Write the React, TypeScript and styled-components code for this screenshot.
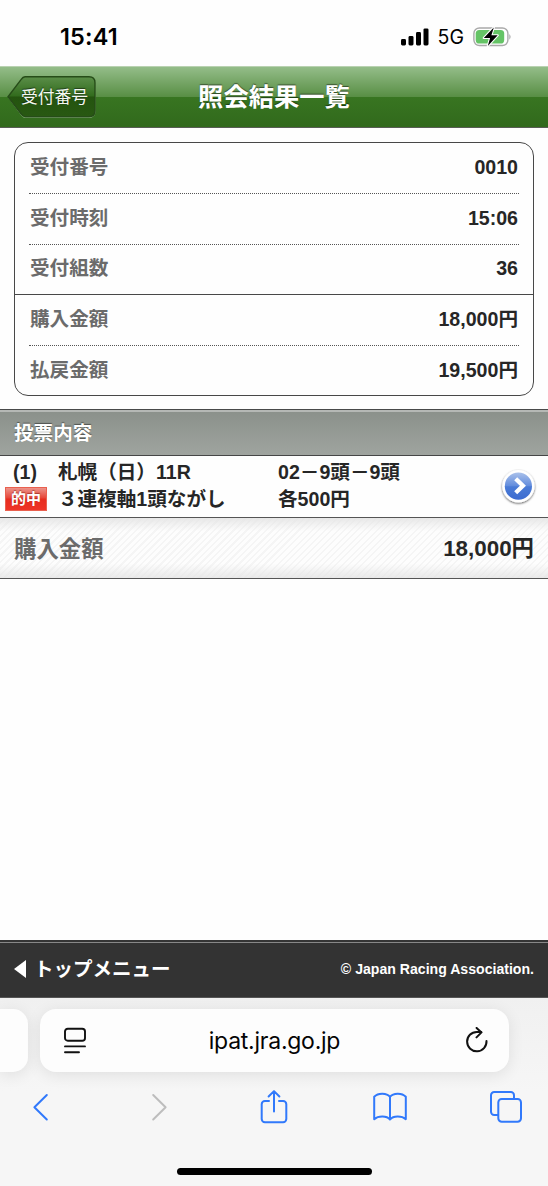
import React from "react";
import styled, { createGlobalStyle } from "styled-components";

const GlobalStyle = createGlobalStyle`
  * { box-sizing: border-box; }
  body {
    margin: 0;
    background: #fefefe;
    color: #262626;
    font-family: "Liberation Sans", "Noto Sans CJK JP", sans-serif;
  }
  svg { display: block; flex: none; }
`;

const Screen = styled.div`
  width: 548px;
  height: 1186px;
  display: flex;
  flex-direction: column;
  overflow: hidden;
  background: #fefefe;
`;

const StatusBar = styled.div`
  flex: none;
  height: 66px;
  padding: 7px 36px 0 60px;
  display: flex;
  align-items: center;
  font-family: Inter, sans-serif;
  color: #000;
`;

const Clock = styled.span`
  font-size: 23.5px;
  font-weight: 600;
  letter-spacing: 0.15px;
`;

const Signals = styled.div`
  margin-left: auto;
  display: flex;
  align-items: center;
`;

const Network = styled.span`
  font-size: 19.5px;
  font-weight: 400;
  margin: 1px 9px 0 9px;
`;

const Header = styled.header`
  flex: none;
  height: 62px;
  padding-left: 7px;
  display: grid;
  grid-template-columns: 90px 1fr 97px;
  align-items: center;
  border-top: 1px solid #b9d2b1;
  border-bottom: 1px solid #585d55;
  background: linear-gradient(#94bd89 0, #588e44 30px, #387521 30px, #31691c 100%);
`;

const BackButton = styled.div`
  position: relative;
  width: 90px;
  height: 43px;
  padding: 0 0 2px 14px;
  display: flex;
  align-items: center;
  color: #f4f8f2;
  font-size: 16.8px;
  text-shadow: 0 -1px 1px rgba(0, 0, 0, 0.5);
`;

const BackShape = styled.svg`
  position: absolute;
  inset: 0;
`;

const BackLabel = styled.span`
  position: relative;
  white-space: nowrap;
`;

const Title = styled.h1`
  margin: 0;
  text-align: center;
  color: #fff;
  font-size: 25.3px;
  line-height: 36px;
  font-weight: 700;
  text-shadow: 0 -1px 1px rgba(0, 0, 0, 0.5);
`;

const Card = styled.dl`
  flex: none;
  margin: 14px 14px 13px;
  height: 254px;
  border: 1px solid #484848;
  border-radius: 14px;
`;

const CardGroup = styled.div<{ $divided?: boolean }>`
  padding: 0 14px;
  border-top: ${(p) => (p.$divided ? "1px solid #484848" : "none")};
`;

const Row = styled.div<{ $height: number }>`
  height: ${(p) => p.$height}px;
  padding: 0 1px 3px;
  display: flex;
  align-items: center;
  justify-content: space-between;
  font-size: 19.6px;
  line-height: 28px;
  font-weight: 700;
  & + & {
    border-top: 1px dotted #555;
  }
`;

const Label = styled.dt`
  color: #6b6b6b;
`;

const Value = styled.dd`
  margin: 0;
`;

const SectionHeading = styled.h2`
  flex: none;
  margin: 0;
  height: 47px;
  padding: 0 14px;
  border-top: 1px solid #494a4a;
  border-bottom: 1px solid #454646;
  box-shadow: inset 0 2px #b5b8b5;
  background: linear-gradient(#8a908a, #9fa49f);
  color: #fff;
  font-size: 19.6px;
  line-height: 46px;
  font-weight: 700;
  text-shadow: 0 -1px 1px rgba(0, 0, 0, 0.45);
`;

const Bet = styled.div`
  flex: none;
  height: 61px;
  padding: 3px 10px 0 5px;
  display: grid;
  grid-template-columns: 53px 220px 1fr 39px;
  font-size: 19.6px;
  line-height: 27px;
  font-weight: 700;
  white-space: nowrap;
`;

const BetColumn = styled.div`
  display: flex;
  flex-direction: column;
`;

const Index = styled.span`
  padding-left: 8px;
`;

const HitBadge = styled.span`
  width: 42px;
  height: 24px;
  margin-top: 1px;
  background: linear-gradient(#ec9389, #e74639 45%, #e62d20 50%, #ee3426);
  border: 1px solid #e9604f;
  color: #fff;
  text-align: center;
  font-size: 15px;
  line-height: 22px;
  text-shadow: 0 -1px 1px rgba(130, 30, 20, 0.6);
`;

const Total = styled.div`
  flex: none;
  height: 62px;
  padding: 0 14px 3px;
  display: flex;
  align-items: center;
  justify-content: space-between;
  border-top: 1px solid #555;
  border-bottom: 1px solid #555;
  background:
    linear-gradient(rgba(228, 228, 228, 0.85), rgba(255, 255, 255, 0) 22%, rgba(255, 255, 255, 0) 76%, rgba(228, 228, 228, 0.8)),
    repeating-linear-gradient(135deg, #fdfdfd 0 3px, #f5f5f5 3px 4.6px);
  font-size: 22.4px;
  font-weight: 700;
`;

const TotalLabel = styled.span`
  color: #6b6b6b;
`;

const TotalValue = styled.span`
  padding-bottom: 1px;
`;

const Footer = styled.footer`
  flex: none;
  margin-top: auto;
  height: 58px;
  padding: 0 14px 2px 13px;
  display: flex;
  align-items: center;
  border-top: 2px solid #353535;
  border-bottom: 1px solid #555;
  box-shadow: inset 0 1px #888;
  background: #333;
  color: #fff;
  font-weight: 700;
`;

const TopMenu = styled.span`
  margin: -2px 0 0 7px;
  font-size: 19.5px;
  white-space: nowrap;
`;

const Copyright = styled.small`
  margin-left: auto;
  font-size: 14.1px;
  white-space: nowrap;
`;

const Browser = styled.div`
  flex: none;
  height: 188px;
  display: flex;
  flex-direction: column;
  background: linear-gradient(#f0f0f0, #f6f6f6 50%);
`;

const Tabs = styled.div`
  margin-top: 11px;
  display: flex;
  gap: 11.5px;
`;

const tabSurface = `
  flex: none;
  height: 63px;
  background: #fdfdfd;
  box-shadow: 0 3px 16px rgba(0, 0, 0, 0.09);
`;

const PreviousTab = styled.div`
  ${tabSurface}
  width: 28px;
  border-radius: 0 15px 15px 0;
`;

const AddressBar = styled.div`
  ${tabSurface}
  width: 469px;
  padding: 0 19px 0 23px;
  border-radius: 16px;
  display: flex;
  align-items: center;
  justify-content: space-between;
`;

const Url = styled.span`
  margin-left: -3px;
  font-family: Inter, sans-serif;
  font-size: 23px;
  letter-spacing: -0.25px;
  color: #050505;
`;

const Toolbar = styled.nav`
  height: 70px;
  padding-right: 26px;
  display: grid;
  grid-template-columns: 80px 160px 68px 164px 1fr;
  align-items: center;
  justify-items: center;
  & > :last-child { justify-self: end; }
`;

const HomeIndicator = styled.div`
  width: 195px;
  height: 7px;
  margin: 26px auto 0;
  border-radius: 4px;
  background: #000;
`;

const blue = "#3179fb";

const summary = [
  [
    { label: "受付番号", value: "0010", height: 50 },
    { label: "受付時刻", value: "15:06", height: 51 },
    { label: "受付組数", value: "36", height: 50 },
  ],
  [
    { label: "購入金額", value: "18,000円", height: 50 },
    { label: "払戻金額", value: "19,500円", height: 51 },
  ],
];

const CellularIcon = () => (
  <svg width="28" height="18" viewBox="0 0 28 18">
    <rect x="0" y="11" width="5" height="6.5" rx="1.4" />
    <rect x="7.5" y="8" width="5" height="9.5" rx="1.4" />
    <rect x="15" y="4" width="5" height="13.5" rx="1.4" />
    <rect x="22.5" y="0.4" width="5" height="17.1" rx="1.4" />
  </svg>
);

const BatteryIcon = () => (
  <svg width="39" height="20" viewBox="0 0 39 20">
    <rect x="0.9" y="1" width="34" height="17.5" rx="5.5" fill="#fff" stroke="#a9a9a9" strokeWidth="1.4" />
    <path d="M36.4 7q2.3 2.8 0 5.8z" fill="#a0a0a0" />
    <rect x="2.7" y="3" width="28.5" height="13.5" rx="3.6" fill="#65c466" />
    <path d="M20.8.5 10.8 11h6.3l-2.3 8 9.9-10.7h-6.3z" fill="#000" stroke="#fff" strokeWidth="2.2" strokeLinejoin="round" paintOrder="stroke" />
  </svg>
);

const GoIcon = () => (
  <svg width="39" height="54" viewBox="0 0 39 54">
    <defs>
      <linearGradient id="goBlue" x1="0" y1="0" x2="0" y2="1">
        <stop offset="0" stopColor="#a9c0ea" />
        <stop offset="0.48" stopColor="#638ddd" />
        <stop offset="0.52" stopColor="#4a7bd6" />
        <stop offset="1" stopColor="#3c6bd0" />
      </linearGradient>
      <filter id="goShadow" x="-20%" y="-20%" width="140%" height="150%">
        <feDropShadow dx="0" dy="1" stdDeviation="1.3" floodOpacity="0.65" />
      </filter>
    </defs>
    <circle cx="19.4" cy="27.2" r="16.2" fill="#fff" filter="url(#goShadow)" />
    <circle cx="19.4" cy="27.2" r="13.6" fill="url(#goBlue)" />
    <path d="m16.700 19.800 7.200 7-7.200 7" fill="none" stroke="#fff" strokeWidth="4.300" />
  </svg>
);

const PageMenuIcon = () => (
  <svg width="24" height="28" viewBox="0 0 24 28" fill="none" stroke="#111" strokeWidth="1.9" strokeLinecap="round">
    <rect x="2" y="1.7" width="20" height="12" rx="2.8" />
    <path d="M2 19.4h20M2 25.3h14" />
  </svg>
);

const ReloadIcon = () => (
  <svg width="24" height="28" viewBox="0 0 24 28" fill="none" stroke="#111" strokeWidth="2" strokeLinecap="round" strokeLinejoin="round">
    <path d="M21.500 14A9.700 9.700 0 1 1 11.800 4.900h4.400" />
    <path d="m11.600.9 4.900 4.500-5 5" />
  </svg>
);

const BackIcon = () => (
  <svg width="20" height="28" viewBox="0 0 20 28" fill="none" stroke={blue} strokeWidth="2" strokeLinecap="round" strokeLinejoin="round">
    <path d="M16.8 2 4.4 14.3 16.8 26.5" />
  </svg>
);

const ForwardIcon = () => (
  <svg width="20" height="28" viewBox="0 0 20 28" fill="none" stroke="#bdbdbd" strokeWidth="2" strokeLinecap="round" strokeLinejoin="round">
    <path d="M3.2 2 15.6 14.3 3.2 26.5" />
  </svg>
);

const ShareIcon = () => (
  <svg width="28" height="36" viewBox="0 0 28 36" fill="none" stroke={blue} strokeWidth="2" strokeLinecap="round" strokeLinejoin="round">
    <path d="M9 12H4.900a3.200 3.200 0 0 0-3.200 3.200v14.900a3.200 3.200 0 0 0 3.200 3.200h18.200a3.200 3.200 0 0 0 3.200-3.200V15.200a3.200 3.200 0 0 0-3.200-3.200H19M14 22.500V2.300M8.600 7.500 14 2.100l5.400 5.400" />
  </svg>
);

const BookIcon = () => (
  <svg width="34" height="30" viewBox="0 0 34 30" fill="none" stroke={blue} strokeWidth="2" strokeLinecap="round" strokeLinejoin="round">
    <path d="M17 4.800C13.800.9 5.200.5 1.200 4.800v22.400c4-3.600 12.600-3.600 15.800.3 3.200-3.900 11.800-3.900 15.800-.3V4.800C28.800.5 20.200.9 17 4.800zM17 4.800v22.700" />
  </svg>
);

const TabsIcon = () => (
  <svg width="32" height="32" viewBox="0 0 32 32" fill="none" stroke={blue} strokeWidth="2" strokeLinecap="round" strokeLinejoin="round">
    <rect x="8.300" y="8" width="22.700" height="22.700" rx="3.400" />
    <path d="M7.500 24H4.200A3.200 3.200 0 0 1 1 20.800V4.200A3.200 3.200 0 0 1 4.200 1h16.600A3.200 3.200 0 0 1 24 4.200v3.300" />
  </svg>
);

export default function App() {
  return (
    <>
      <GlobalStyle />
      <Screen>
        <StatusBar>
          <Clock>15:41</Clock>
          <Signals>
            <CellularIcon />
            <Network>5G</Network>
            <BatteryIcon />
          </Signals>
        </StatusBar>

        <Header>
          <BackButton>
            <BackShape width="90" height="43" viewBox="0 0 90 43">
              <defs>
                <linearGradient id="backFill" x1="0" y1="0" x2="0" y2="1">
                  <stop offset="0" stopColor="#5b8e49" />
                  <stop offset="0.49" stopColor="#316b1c" />
                  <stop offset="0.5" stopColor="#24540f" />
                  <stop offset="1" stopColor="#285812" />
                </linearGradient>
              </defs>
              <path d="M18 1.500h64q6 0 6 6v28q0 6-6 6H18q-2 0-4-3L1.500 21.500 14 4.500q2-3 4-3z" fill="none" stroke="#91b784" strokeWidth="1" />
              <path d="M18 .7h64q6 0 6 6v28q0 6-6 6H18q-2 0-4-3L1 20.700 14 3.700q2-3 4-3z" fill="url(#backFill)" stroke="#264c18" strokeWidth="1.4" />
            </BackShape>
            <BackLabel>受付番号</BackLabel>
          </BackButton>
          <Title>照会結果一覧</Title>
        </Header>

        <Card>
          {summary.map((group, i) => (
            <CardGroup key={i} $divided={i > 0}>
              {group.map((row) => (
                <Row key={row.label} $height={row.height}>
                  <Label>{row.label}</Label>
                  <Value>{row.value}</Value>
                </Row>
              ))}
            </CardGroup>
          ))}
        </Card>

        <SectionHeading>投票内容</SectionHeading>
        <Bet>
          <BetColumn>
            <Index>(1)</Index>
            <HitBadge>的中</HitBadge>
          </BetColumn>
          <BetColumn>
            <span>札幌（日）11R</span>
            <span>３連複軸1頭ながし</span>
          </BetColumn>
          <BetColumn>
            <span>02－9頭－9頭</span>
            <span>各500円</span>
          </BetColumn>
          <BetColumn>
            <GoIcon />
          </BetColumn>
        </Bet>
        <Total>
          <TotalLabel>購入金額</TotalLabel>
          <TotalValue>18,000円</TotalValue>
        </Total>

        <Footer>
          <svg width="14" height="18" viewBox="0 0 14 18">
            <path d="M13 0v18L1 9z" fill="#fff" />
          </svg>
          <TopMenu>トップメニュー</TopMenu>
          <Copyright>© Japan Racing Association.</Copyright>
        </Footer>

        <Browser>
          <Tabs>
            <PreviousTab />
            <AddressBar>
              <PageMenuIcon />
              <Url>ipat.jra.go.jp</Url>
              <ReloadIcon />
            </AddressBar>
          </Tabs>
          <Toolbar>
            <BackIcon />
            <ForwardIcon />
            <ShareIcon />
            <BookIcon />
            <TabsIcon />
          </Toolbar>
          <HomeIndicator />
        </Browser>
      </Screen>
    </>
  );
}
